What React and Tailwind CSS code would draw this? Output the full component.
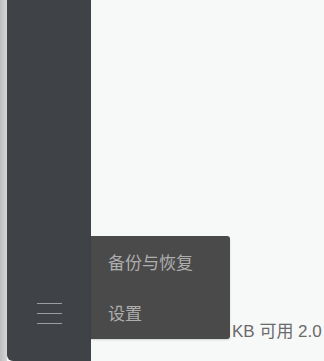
export default function App() {
  return (
    <div
      className="flex h-[361px] w-[324px] overflow-hidden bg-[#f7f8f8]"
      style={{ fontFamily: '"Helvetica Neue", "Liberation Sans", "Noto Sans CJK SC", sans-serif' }}
    >
      <div className="w-[7px] shrink-0 bg-gradient-to-r from-[#bdbdbd] to-[#d6d6d6]" />
      <aside className="relative flex h-[361px] w-[84px] shrink-0 flex-col justify-end rounded-bl-[6px] bg-[#3f4347]">
        <button className="mb-[37px] ml-[30px] flex w-[25px] flex-col gap-[9px]">
          <span className="block h-[1px] w-full bg-[#9a9c9e]" />
          <span className="block h-[1px] w-full bg-[#9a9c9e]" />
          <span className="block h-[1px] w-full bg-[#9a9c9e]" />
        </button>
        <div className="absolute left-[84px] top-[236px] z-10 flex h-[103px] w-[139px] flex-col rounded-r-[3px] bg-[#4a4a4a] pl-[17px] text-[17px] text-[#aeaeae] shadow-[0_1px_2px_rgba(0,0,0,0.15)]">
          <div className="flex h-[56px] items-center">备份与恢复</div>
          <div className="flex h-[46px] items-center">设置</div>
        </div>
      </aside>
      <main className="relative flex-1">
        <div className="absolute left-[141px] top-[319px] whitespace-nowrap text-[17px] text-[#6a6a6a]">
          KB 可用 2.0
        </div>
      </main>
    </div>
  )
}
